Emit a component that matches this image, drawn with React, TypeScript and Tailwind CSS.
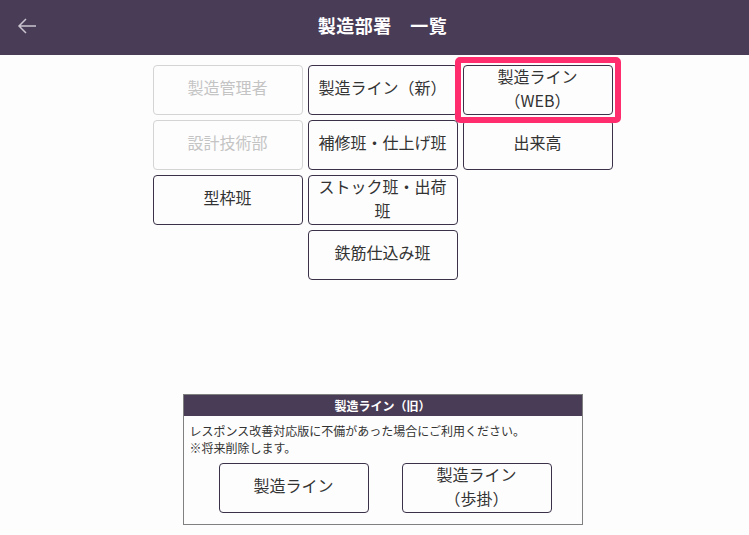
import React from "react";

const font = { fontFamily: '"Noto Sans CJK JP", "Noto Sans", sans-serif' };

function Btn({ children, disabled, multi }: { children: React.ReactNode; disabled?: boolean; multi?: boolean }) {
  return (
    <div
      className={
        "w-[150px] h-[50px] flex items-center justify-center text-center px-2 rounded-[4px] border text-[16px] leading-6 " +
        (multi ? "pb-[4px] " : "pb-[7px] ") +
        (disabled ? "border-[#d4d4d4] text-[#c4c4c4]" : "border-[#3b3148] text-[#333333]")
      }
    >
      {children}
    </div>
  );
}

export default function App() {
  return (
    <div className="w-[749px] h-[535px] bg-[#fdfdfd] overflow-hidden" style={font}>
      <div className="h-[55px] bg-[#493c56] relative flex items-center justify-center pl-4">
        <svg className="absolute left-[17px] top-[17px]" width="20" height="18" viewBox="0 0 20 18" fill="none">
          <path d="M19 9H2M9 2L2 9l7 7" stroke="#c9c4cf" strokeWidth="1.5" />
        </svg>
        <div className="text-white font-bold text-[18px] tracking-[0.5px] -mt-[5px]">製造部署　一覧</div>
      </div>
      <div className="flex flex-col items-center pl-4">
        <div className="mt-[10px] grid grid-cols-[150px_150px_150px] gap-x-[5px] gap-y-[5px]">
          <Btn disabled>製造管理者</Btn>
          <Btn>製造ライン（新）</Btn>
          <div className="relative">
            <div className="absolute -inset-[8px] rounded-[5px] border-[6px] border-[#ff2d6e]" />
            <Btn multi>
              製造ライン
              <br />
              （WEB）
            </Btn>
          </div>
          <Btn disabled>設計技術部</Btn>
          <Btn>補修班・仕上げ班</Btn>
          <Btn>出来高</Btn>
          <Btn>型枠班</Btn>
          <Btn multi>ストック班・出荷班</Btn>
          <div />
          <div />
          <Btn>鉄筋仕込み班</Btn>
          <div />
        </div>
        <div className="mt-[114px] w-[400px] h-[131px] border border-[#808080] flex flex-col">
          <div className="h-[21px] bg-[#493c56] text-white font-bold text-[12px] flex items-center justify-center">
            製造ライン（旧）
          </div>
          <div className="px-[6px] pt-[6px] text-[12px] leading-[17px] text-[#333333]">
            レスポンス改善対応版に不備があった場合にご利用ください。
            <br />
            ※将来削除します。
          </div>
          <div className="mt-[7px] flex justify-center gap-x-[33px] pl-[5px]">
            <Btn>製造ライン</Btn>
            <Btn multi>
              製造ライン
              <br />
              （歩掛）
            </Btn>
          </div>
        </div>
      </div>
    </div>
  );
}
